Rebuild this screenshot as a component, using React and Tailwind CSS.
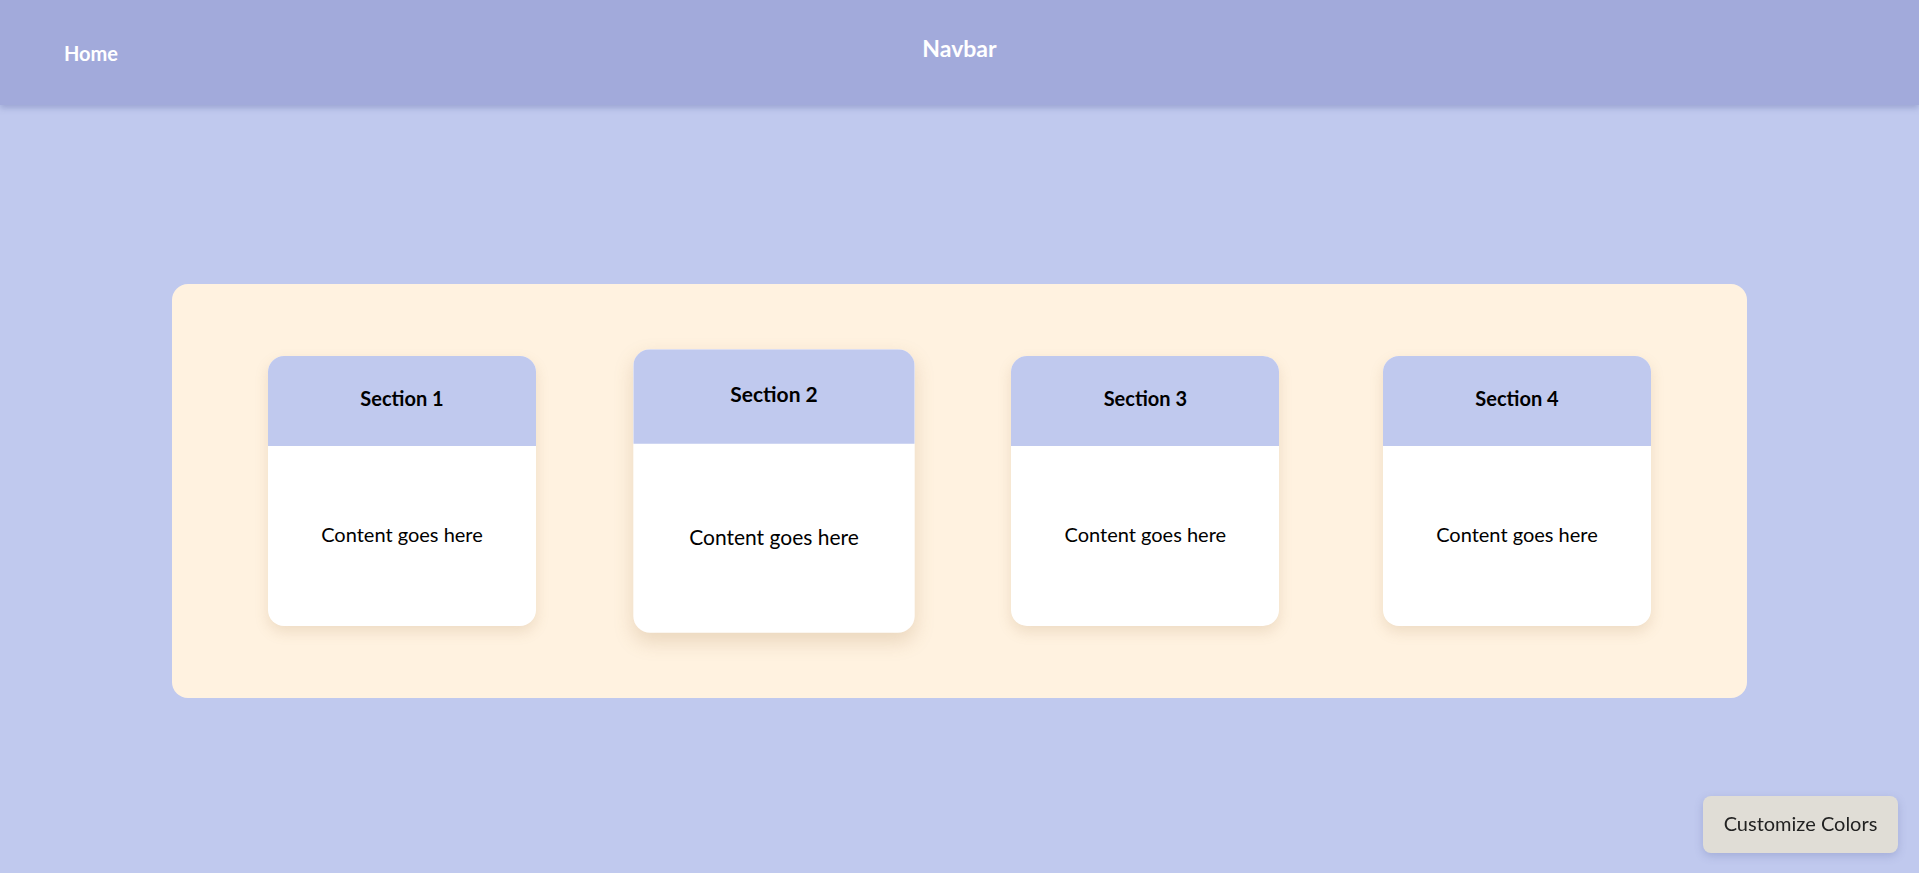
const sections = ["Section 1", "Section 2", "Section 3", "Section 4"];

const Card = ({ title, active }) => (
    <div
        className={`w-[268px] h-[270px] rounded-2xl overflow-hidden bg-white flex flex-col shadow-[0_6px_14px_rgba(160,120,70,0.18)] ${active ? "scale-105 shadow-[0_8px_18px_rgba(160,120,70,0.22)]" : ""}`}
    >
        <div className="h-[90px] bg-[#c0c9ee] flex items-center justify-center pb-[6px]">
            <h3 className="text-[20px] font-bold text-black">{title}</h3>
        </div>
        <div className="flex-1 flex items-center justify-center pb-[5px]">
            <p className="text-[20px] text-black">Content goes here</p>
        </div>
    </div>
);

export default function App() {
    return (
        <div className="min-h-screen bg-[#c0c9ee] font-['Lato',sans-serif] flex flex-col">
            {/* Navbar */}
            <nav className="h-[105px] bg-[#a2aadb] shadow-[0_3px_6px_rgba(90,100,160,0.35)] grid grid-cols-3 items-center px-16 relative z-10">
                <a className="text-[20px] font-bold text-white justify-self-start">Home</a>
                <span className="text-[23px] font-bold text-white justify-self-center pb-2">Navbar</span>
                <span />
            </nav>

            {/* Main */}
            <main className="pt-[179px]">
                <div className="w-[1575px] mx-auto bg-[#fff2e0] rounded-2xl px-24 py-[72px] flex justify-between items-center">
                    {sections.map((s, i) => (
                        <Card key={s} title={s} active={i === 1} />
                    ))}
                </div>
            </main>

            <button className="fixed bottom-5 right-[21px] w-[195px] h-[57px] rounded-lg bg-[#e0ddd6] text-[20px] text-[#222] pb-1 shadow-[0_3px_8px_rgba(80,90,150,0.25)]">
                Customize Colors
            </button>
        </div>
    );
}
